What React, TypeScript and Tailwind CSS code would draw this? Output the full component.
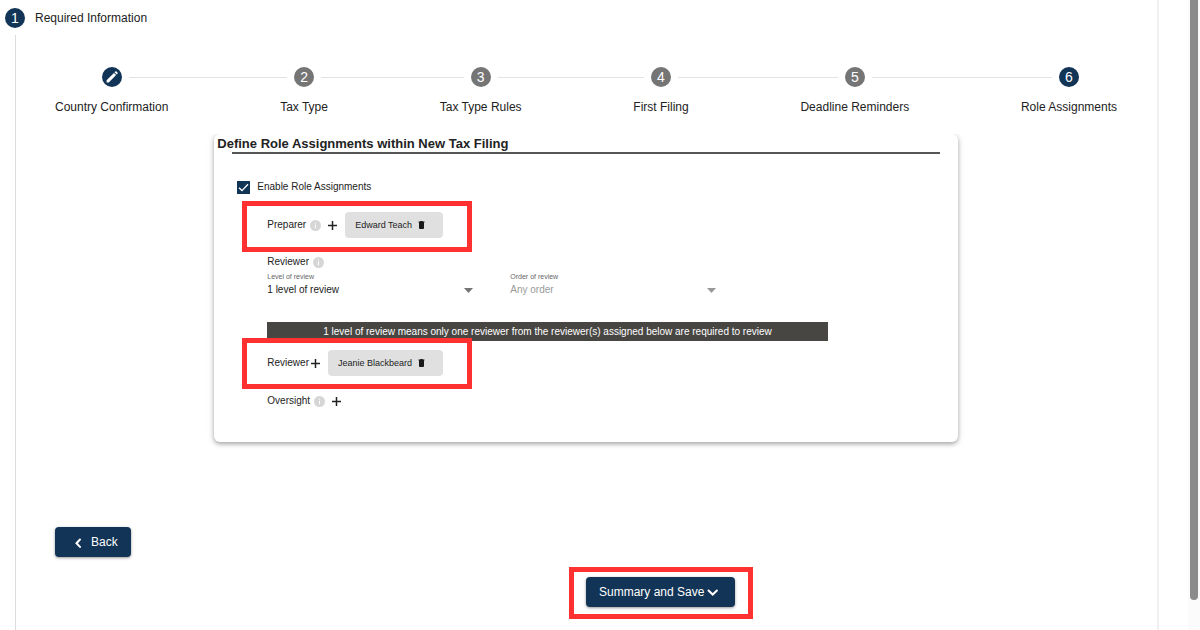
import { useState, type ReactNode } from 'react'

const STEPS = [
  'Country Confirmation',
  'Tax Type',
  'Tax Type Rules',
  'First Filing',
  'Deadline Reminders',
  'Role Assignments',
]

function PencilIcon() {
  return (
    <svg viewBox="0 0 16 16" className="h-4 w-4" fill="currentColor" aria-hidden="true">
      <path d="M2.600 11.200 9.900 3.900 12.100 6.100 4.800 13.400H2.600zM10.500 3.300 11.200 2.600a1 1 0 0 1 1.400 0l.8.8a1 1 0 0 1 0 1.400l-.7.7z" />
    </svg>
  )
}

function Chevron({ d }: { d: string }) {
  return (
    <svg viewBox="0 0 14 14" className="h-3.5 w-3.5" fill="none" stroke="currentColor" strokeWidth="2" strokeLinecap="round" aria-hidden="true">
      <path d={d} />
    </svg>
  )
}

function InfoIcon() {
  return (
    <svg viewBox="0 0 11 11" className="h-[11px] w-[11px] shrink-0" role="img" aria-label="Info">
      <circle cx="5.5" cy="5.5" r="5.5" fill="#d6d6d6" />
      <path d="M5.5 2.6v1M5.5 4.7v3.6" stroke="#fff" strokeWidth="1" />
    </svg>
  )
}

function AddButton({ label }: { label: string }) {
  return (
    <button type="button" aria-label={label} className="shrink-0 text-[#222]">
      <svg viewBox="0 0 9 9" className="h-[9px] w-[9px]" stroke="currentColor" strokeWidth="1.5">
        <path d="M4.5 0v9M0 4.5h9" />
      </svg>
    </button>
  )
}

function PersonChip({ name }: { name: string }) {
  return (
    <span className="flex h-[26px] items-center gap-1.5 rounded bg-[#e0e0e0] pr-[18px] pl-2.5 text-[9px] text-[#1c1c1c]">
      {name}
      <button type="button" aria-label={`Remove ${name}`}>
        <svg viewBox="0 0 7 8" className="h-2 w-[7px]" fill="#1a1a1a">
          <path d="M2.200 0h2.600v.5h1.700v1H6v5.600a.9.9 0 0 1-.9.9H1.900a.9.9 0 0 1-.9-.9V1.500H.5v-1h1.700z" />
        </svg>
      </button>
    </span>
  )
}

function Highlight({ children, className = '' }: { children: ReactNode; className?: string }) {
  return <div className={`border-[5px] border-[#ff3131] ${className}`}>{children}</div>
}

function ReviewSelect({ id, label, value, disabled }: { id: string; label: string; value: string; disabled?: boolean }) {
  return (
    <div className="w-[206px]">
      <label htmlFor={id} className="block text-[7px] leading-[10px] text-[#666]">{label}</label>
      <div className="grid items-center">
        <select
          id={id}
          disabled={disabled}
          className="col-start-1 row-start-1 h-4 w-full appearance-none bg-transparent text-[10px] leading-4 text-[#222] disabled:text-[#9a9a9a] disabled:opacity-100"
        >
          <option>{value}</option>
        </select>
        <svg viewBox="0 0 9 5" className={`pointer-events-none col-start-1 row-start-1 h-[5px] w-[9px] justify-self-end ${disabled ? 'fill-[#999]' : 'fill-[#757575]'}`}>
          <path d="M0 0h9L4.500 5z" />
        </svg>
      </div>
    </div>
  )
}

function Stepper() {
  return (
    <div className="grid">
      {/* rail behind the step circles */}
      <div className="col-start-1 row-start-1 mt-2.5 mr-[46px] ml-[55px] h-px self-start bg-[#e3e3e3]" />
      <ol className="col-start-1 row-start-1 flex justify-between">
        {STEPS.map((label, i) => (
          <li key={label} className="flex flex-col items-center">
            <span className="bg-white px-[7px]">
              <span className={`flex h-5 w-5 items-center justify-center rounded-full text-sm leading-5 text-white ${i === 0 || i === 5 ? 'bg-[#123456]' : 'bg-[#757575]'}`}>
                {i === 0 ? <PencilIcon /> : i + 1}
              </span>
            </span>
            <span className="mt-3 text-xs leading-4 text-[#222]">{label}</span>
          </li>
        ))}
      </ol>
    </div>
  )
}

function RoleCard() {
  const [enabled, setEnabled] = useState(true)

  return (
    <section className="mx-auto w-[70%] rounded-md bg-white pb-[34px] shadow-[0_2px_4px_rgba(0,0,0,0.3),0_1px_8px_rgba(0,0,0,0.1)]">
      <h2 className="pt-0.5 pl-[3px] text-[13px] leading-4 font-bold text-[#222]">Define Role Assignments within New Tax Filing</h2>
      <div className="mx-[18px] h-0.5 bg-[#555]" />

      <label className="mt-[25px] ml-[23px] flex h-4 items-center gap-[7px]">
        <span className="grid h-[13px] w-[13px]">
          <input
            type="checkbox"
            checked={enabled}
            onChange={(e) => setEnabled(e.target.checked)}
            className="col-start-1 row-start-1 h-[13px] w-[13px] appearance-none border border-[#123456] bg-white checked:bg-[#123456]"
          />
          <svg viewBox="0 0 13 13" className="pointer-events-none col-start-1 row-start-1" fill="none" stroke="#fff" strokeWidth="1.3">
            <path d="M2 6.800 5 9.600 11 3.300" />
          </svg>
        </span>
        Enable Role Assignments
      </label>

      <div className="mr-[130px] ml-[53px]">
        <Highlight className="mt-1.5 -ml-[25px] w-[230px] pt-1.5 pb-[9px] pl-5">
          <div className="flex items-center">
            <span className="mr-1">Preparer</span>
            <InfoIcon />
            <span className="mr-2 ml-[7px] flex"><AddButton label="Add preparer" /></span>
            <PersonChip name="Edward Teach" />
          </div>
        </Highlight>

        <div className="mt-[3px] flex h-3.5 items-center gap-1">
          Reviewer
          <InfoIcon />
        </div>
        <div className="mt-[3px] flex gap-[37px]">
          <ReviewSelect id="level" label="Level of review" value="1 level of review" />
          <ReviewSelect id="order" label="Order of review" value="Any order" disabled />
        </div>

        <p className="mt-6 bg-[#484643] text-center leading-[19px] text-white">
          1 level of review means only one reviewer from the reviewer(s) assigned below are required to review
        </p>

        <Highlight className="relative -mt-[3px] -ml-[25px] w-[230px] pt-[7px] pb-2 pl-5">
          <div className="flex items-center">
            <span className="mr-0.5">Reviewer</span>
            <span className="mr-2 flex"><AddButton label="Add reviewer" /></span>
            <PersonChip name="Jeanie Blackbeard" />
          </div>
        </Highlight>

        <div className="mt-[5px] flex h-3.5 items-center">
          <span className="mr-1">Oversight</span>
          <InfoIcon />
          <span className="ml-[7px] flex"><AddButton label="Add oversight" /></span>
        </div>
      </div>
    </section>
  )
}

export default function App() {
  return (
    <div className="flex min-h-screen bg-white font-['Liberation_Sans',Arial,sans-serif] text-[10px] leading-3.5 text-[#222]">
      <main className="flex flex-1 flex-col border-r-2 border-[#f0f0f0]">
        <header className="flex h-[35px] items-center gap-2.5 pl-[5px]">
          <span className="flex h-5 w-5 items-center justify-center rounded-full bg-[#123456] text-sm text-white">1</span>
          <h1 className="text-xs text-[#222]">Required Information</h1>
        </header>

        <div className="ml-[15px] flex-1 border-l border-[#dcdcdc] pt-8 pr-10 pl-[39px]">
          <Stepper />
          <div className="mt-[19px] overflow-hidden pb-3">
            <RoleCard />
          </div>

          <button type="button" className="mt-[73px] flex h-[30px] items-center gap-1.5 rounded bg-[#123456] pr-[13px] pl-4 text-xs text-white shadow-[0_1px_3px_rgba(0,0,0,0.4)]">
            <span className="pt-0.5"><Chevron d="M9 3.500 5.500 7.200 9 10.900" /></span>
            Back
          </button>

          <Highlight className="mt-2.5 ml-[514px] w-fit pt-[5px] pr-[13px] pb-[7px] pl-3">
            <button type="button" className="flex h-[30px] items-center gap-0.5 rounded bg-[#123456] pr-[15px] pl-[13px] text-xs text-white shadow-[0_1px_3px_rgba(0,0,0,0.4)]">
              Summary and Save
              <Chevron d="M2.500 5.500 6.700 9.500 10.900 5.500" />
            </button>
          </Highlight>
        </div>
      </main>

      {/* scroll rail */}
      <div className="ml-[29px] flex w-3 flex-col bg-[#fbfbfb] pb-[30px] pl-0.5">
        <div className="w-2 flex-1 rounded-b-full bg-[#8b8b8b]" />
      </div>
    </div>
  )
}
